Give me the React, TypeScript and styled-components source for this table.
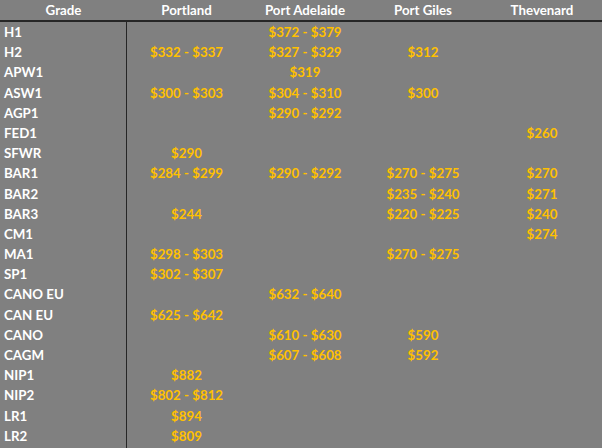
import React from 'react';
import styled, { createGlobalStyle } from 'styled-components';

const GlobalStyle = createGlobalStyle`
  html, body {
    margin: 0;
    padding: 0;
    background: #808080;
  }
  body {
    font-family: Lato, 'Liberation Sans', Arial, sans-serif;
  }
`;

const COLUMNS = ['Portland', 'Port Adelaide', 'Port Giles', 'Thevenard'];

type Row = [string, string, string, string, string];

const ROWS: Row[] = [
  ['H1', '', '$372 - $379', '', ''],
  ['H2', '$332 - $337', '$327 - $329', '$312', ''],
  ['APW1', '', '$319', '', ''],
  ['ASW1', '$300 - $303', '$304 - $310', '$300', ''],
  ['AGP1', '', '$290 - $292', '', ''],
  ['FED1', '', '', '', '$260'],
  ['SFWR', '$290', '', '', ''],
  ['BAR1', '$284 - $299', '$290 - $292', '$270 - $275', '$270'],
  ['BAR2', '', '', '$235 - $240', '$271'],
  ['BAR3', '$244', '', '$220 - $225', '$240'],
  ['CM1', '', '', '', '$274'],
  ['MA1', '$298 - $303', '', '$270 - $275', ''],
  ['SP1', '$302 - $307', '', '', ''],
  ['CANO EU', '', '$632 - $640', '', ''],
  ['CAN EU', '$625 - $642', '', '', ''],
  ['CANO', '', '$610 - $630', '$590', ''],
  ['CAGM', '', '$607 - $608', '$592', ''],
  ['NIP1', '$882', '', '', ''],
  ['NIP2', '$802 - $812', '', '', ''],
  ['LR1', '$894', '', '', ''],
  ['LR2', '$809', '', '', ''],
];

const ROW_H = 20.2;

const Sheet = styled.div`
  width: 602px;
  height: 448px;
  overflow: hidden;
  background: #808080;
  display: flex;
  flex-direction: column;
`;

const Grid = styled.div`
  display: grid;
  grid-template-columns: 127px 119px 118px 118px 120px;
`;

const HeaderRow = styled(Grid)`
  height: 20px;
  flex-shrink: 0;
  border-bottom: 2px solid #262626;
  align-items: center;
`;

const HeaderCell = styled.div`
  color: #ffffff;
  font-weight: 700;
  font-size: 13.3px;
  text-align: center;
  white-space: nowrap;
`;

const Body = styled(Grid)`
  flex: 1;
  grid-template-rows: repeat(${ROWS.length - 1}, ${ROW_H}px) 1fr;
  align-items: start;
`;

const GradeCell = styled.div`
  color: #ffffff;
  font-weight: 700;
  font-size: 13.3px;
  line-height: ${ROW_H}px;
  padding-left: 4px;
  align-self: stretch;
  border-right: 1px solid #262626;
  white-space: nowrap;
`;

const PriceCell = styled.div`
  color: #ffc000;
  font-weight: 700;
  font-size: 13.3px;
  line-height: ${ROW_H}px;
  text-align: center;
  white-space: nowrap;
`;

export default function App() {
  return (
    <>
      <GlobalStyle />
      <Sheet>
        <HeaderRow>
          <HeaderCell>Grade</HeaderCell>
          {COLUMNS.map((c) => (
            <HeaderCell key={c}>{c}</HeaderCell>
          ))}
        </HeaderRow>
        <Body>
          {ROWS.map(([grade, ...prices]) => (
            <React.Fragment key={grade}>
              <GradeCell>{grade}</GradeCell>
              {prices.map((p, i) => (
                <PriceCell key={i}>{p}</PriceCell>
              ))}
            </React.Fragment>
          ))}
        </Body>
      </Sheet>
    </>
  );
}
